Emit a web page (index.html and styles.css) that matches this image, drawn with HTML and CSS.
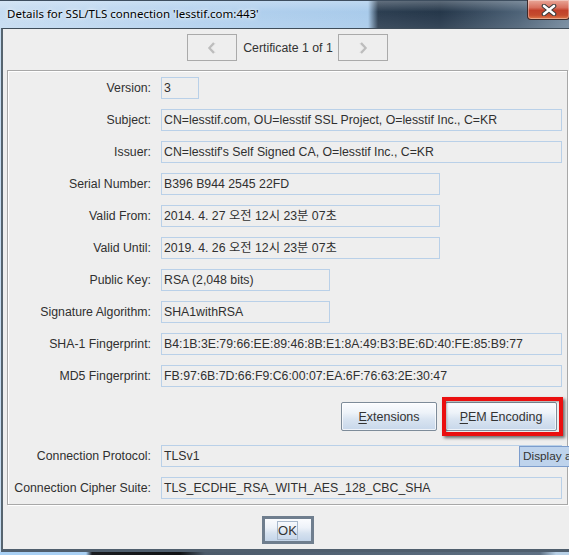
FILE: index.html
```html
<!DOCTYPE html>
<html>
<head>
<meta charset="utf-8">
<link rel="stylesheet" href="styles.css">
</head>
<body>
<div class="window">
  <div class="titlebar">
    <span class="title">Details for SSL/TLS connection 'lesstif.com:443'</span>
    <div class="close">
      <svg width="16" height="12" viewBox="0 0 16 12">
        <path d="M3 2 L13 10 M13 2 L3 10" stroke="#3a3a3a" stroke-width="4.6" stroke-linecap="round"/>
        <path d="M3 2 L13 10 M13 2 L3 10" stroke="#ffffff" stroke-width="2.6" stroke-linecap="round"/>
      </svg>
    </div>
  </div>
  <div class="frame">
    <div class="nav">
      <button class="navbtn" aria-label="previous">
        <svg width="12" height="14" viewBox="0 0 12 14">
          <path d="M8 2 L3.5 7 L8 12" fill="none" stroke="#bdbdbd" stroke-width="2.4"/>
          <path d="M9.5 2.5 L5.2 7 L9.5 11.5" fill="none" stroke="#e0e0e0" stroke-width="1"/>
        </svg>
      </button>
      <span class="navtext">Certificate 1 of 1</span>
      <button class="navbtn" aria-label="next">
        <svg width="12" height="14" viewBox="0 0 12 14">
          <path d="M4 2 L8.5 7 L4 12" fill="none" stroke="#bdbdbd" stroke-width="2.4"/>
          <path d="M2.5 2.5 L6.8 7 L2.5 11.5" fill="none" stroke="#e0e0e0" stroke-width="1"/>
        </svg>
      </button>
    </div>
    <div class="panel">
      <div class="grid">
        <span class="label">Version:</span><div class="field w-ver">3</div>
        <span class="label">Subject:</span><div class="field">CN=lesstif.com, OU=lesstif SSL Project, O=lesstif Inc., C=KR</div>
        <span class="label">Issuer:</span><div class="field">CN=lesstif's Self Signed CA, O=lesstif Inc., C=KR</div>
        <span class="label">Serial Number:</span><div class="field w-mid">B396 B944 2545 22FD</div>
        <span class="label">Valid From:</span><div class="field w-mid">2014. 4. 27 오전 12시 23분 07초</div>
        <span class="label">Valid Until:</span><div class="field w-mid">2019. 4. 26 오전 12시 23분 07초</div>
        <span class="label">Public Key:</span><div class="field w-small">RSA (2,048 bits)</div>
        <span class="label">Signature Algorithm:</span><div class="field w-small">SHA1withRSA</div>
        <span class="label">SHA-1 Fingerprint:</span><div class="field">B4:1B:3E:79:66:EE:89:46:8B:E1:8A:49:B3:BE:6D:40:FE:85:B9:77</div>
        <span class="label">MD5 Fingerprint:</span><div class="field">FB:97:6B:7D:66:F9:C6:00:07:EA:6F:76:63:2E:30:47</div>
        <div class="actions">
          <button class="btn btn-ext"><u>E</u>xtensions</button>
          <button class="btn btn-pem"><u>P</u>EM Encoding</button>
        </div>
        <span class="label">Connection Protocol:</span>
        <div class="field field-proto">TLSv1<span class="tooltip">Display a</span></div>
        <span class="label">Connection Cipher Suite:</span><div class="field">TLS_ECDHE_RSA_WITH_AES_128_CBC_SHA</div>
      </div>
    </div>
    <div class="footer">
      <button class="okbtn"><span class="focus">OK</span></button>
    </div>
  </div>
  <div class="taskbar"></div>
</div>
</body>
</html>
```
FILE: styles.css
```css
html, body {
  margin: 0;
  padding: 0;
  width: 569px;
  height: 555px;
  overflow: hidden;
  background: #eeeeee;
}

.window {
  width: 575px;
  height: 555px;
  display: flex;
  flex-direction: column;
  background: linear-gradient(90deg, #c6dcf1 0, #b3d1ee 200px, #a9cbeb 368px, #2c3e51 378px, #25374a 440px, #4e6378 520px, #7a8fa3 575px);
}

.titlebar {
  height: 28px;
  flex: none;
  display: flex;
  align-items: flex-start;
  border-top: 1px solid #3e4e5f;
  box-sizing: border-box;
  position: relative;
  background: linear-gradient(180deg, rgba(255,255,255,0.25) 0, rgba(255,255,255,0) 40%, rgba(255,255,255,0.08) 100%);
}

.title {
  font-family: "Noto Sans", "Open Sans", sans-serif;
  font-size: 11.5px;
  color: #000;
  margin: 5px 0 0 7px;
  line-height: 16px;
  text-shadow: 0 0 6px rgba(255,255,255,0.9), 0 0 3px rgba(255,255,255,0.9);
}

.close {
  position: absolute;
  top: -1px;
  right: 5px;
  width: 43px;
  height: 20px;
  box-sizing: border-box;
  border: 1px solid #3d2a2a;
  border-top: none;
  border-radius: 0 0 4px 4px;
  background: linear-gradient(180deg, #e9a899 0, #d8705e 40%, #c1402a 55%, #c44b2e 80%, #e0794a 100%);
  box-shadow: inset 0 0 0 1px rgba(255,255,255,0.35);
  display: flex;
  align-items: center;
  justify-content: center;
}

.frame {
  flex: 1;
  margin: 0 1px;
  border-left: 2px solid #56646f;
  border-right: 2px solid #56646f;
  border-top: 1px solid #3f4d5a;
  border-bottom: 3px solid #4f5e6d;
  background: #eeeeee;
  padding: 5px 4px 4px;
  display: flex;
  flex-direction: column;
  font-family: "Liberation Sans", Arial, "Noto Sans CJK KR", sans-serif;
  font-size: 12.3px;
  color: #303030;
}

.nav {
  display: flex;
  justify-content: center;
  align-items: center;
  height: 27px;
  gap: 6px;
  margin-bottom: 9px;
}

.navbtn {
  width: 50px;
  height: 27px;
  box-sizing: border-box;
  border: 1px solid #aaaaaa;
  background: #eeeeee;
  padding: 0;
  display: flex;
  align-items: center;
  justify-content: center;
}

.navtext {
  color: #333;
  margin-right: -1px;
}

.panel {
  border: 1px solid #a8a8a8;
  box-shadow: inset 1px 1px 0 #ffffff, 1px 1px 0 #ffffff;
  padding: 6px 5px 5px 0;
}

.grid {
  display: grid;
  grid-template-columns: 143px 1fr;
  column-gap: 10px;
  row-gap: 10px;
  align-items: center;
}

.label {
  text-align: right;
  white-space: nowrap;
}

.field {
  height: 22px;
  box-sizing: border-box;
  border: 1px solid #b9d0e8;
  padding: 0 2px;
  line-height: 20px;
  white-space: nowrap;
}

.w-ver { width: 38px; }
.w-mid { width: 279px; }
.w-small { width: 169px; }

.field-proto {
  position: relative;
}

.tooltip {
  position: absolute;
  left: 357px;
  top: 0;
  width: 60px;
  height: 21px;
  box-sizing: border-box;
  padding: 0 3px;
  line-height: 19px;
  background: #bed3ec;
  border: 1px solid #7c9dcd;
  color: #333;
  white-space: nowrap;
  font-size: 11.8px;
}

.actions {
  grid-column: 2;
  display: flex;
  justify-content: flex-end;
  gap: 8px;
  padding-right: 5px;
  margin: 5px 0 4px;
}

.btn {
  height: 29px;
  box-sizing: border-box;
  border: 1px solid #7d8b99;
  border-radius: 2px;
  background: linear-gradient(180deg, #fbfcfe 0, #eef3f9 35%, #d9e4f1 60%, #c7d7ea 100%);
  box-shadow: inset 0 0 0 1px rgba(255,255,255,0.7);
  font-family: "Liberation Sans", Arial, sans-serif;
  font-size: 12.5px;
  color: #333;
  padding: 0;
}

.btn u {
  text-decoration-thickness: 1px;
  text-underline-offset: 2px;
}

.btn-ext { width: 96px; }

.btn-pem {
  width: 112px;
  position: relative;
}

.btn-pem::after {
  content: "";
  position: absolute;
  left: -4px;
  right: -7px;
  top: -6px;
  bottom: -6px;
  border: 4px solid #ea0f0f;
  box-shadow: 2px 2px 3px rgba(0,0,0,0.55), inset 1px 1px 2px rgba(0,0,0,0.3);
  pointer-events: none;
}

.footer {
  display: flex;
  justify-content: center;
  margin-top: 11px;
}

.okbtn {
  width: 52px;
  height: 28px;
  box-sizing: border-box;
  border: 3px solid #6f7e8e;
  background: linear-gradient(180deg, #fbfcfe 0, #edf2f9 40%, #d5e1ef 65%, #c4d5e9 100%);
  padding: 0;
  display: flex;
  align-items: center;
  justify-content: center;
  font-family: "Liberation Sans", Arial, sans-serif;
  font-size: 13px;
  color: #333;
}

.focus {
  border: 1px solid #a9b9cc;
  padding: 1px 0;
  line-height: 15px;
}

.taskbar {
  height: 3px;
  flex: none;
  background: linear-gradient(90deg, #a9d0f4 0, #a9d0f4 86px, #1b1d21 92px, #101214 180px, #4b5a6a 205px, #5e7083 540px, #b8d0e6 556px);
}
```
